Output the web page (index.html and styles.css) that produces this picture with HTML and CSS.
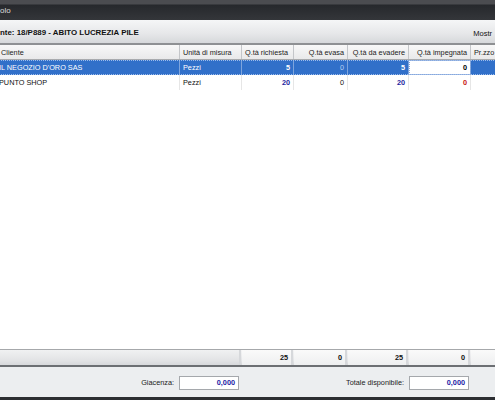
FILE: index.html
```html
<!DOCTYPE html>
<html lang="it">
<head>
<meta charset="utf-8">
<title>Impegni articolo</title>
<link rel="stylesheet" href="styles.css">
</head>
<body>
<div class="window">
  <div class="titlebar"><span class="title">olo</span></div>
  <div class="infobar">
    <span class="info-title">nte: 18/P889 - ABITO LUCREZIA PILE</span>
    <span class="info-right">Mostr</span>
  </div>
  <div class="grid">
    <div class="row head">
      <div class="cell first">Cliente</div>
      <div class="cell">Unità di misura</div>
      <div class="cell">Q.tà richiesta</div>
      <div class="cell num">Q.tà evasa</div>
      <div class="cell num">Q.tà da evadere</div>
      <div class="cell num">Q.tà impegnata</div>
      <div class="cell">Pr.zzo</div>
    </div>
    <div class="row sel">
      <div class="cell first">IL NEGOZIO D'ORO SAS</div>
      <div class="cell">Pezzi</div>
      <div class="cell num b">5</div>
      <div class="cell num dim">0</div>
      <div class="cell num b">5</div>
      <div class="cell num b edit">0</div>
      <div class="cell"></div>
    </div>
    <div class="row">
      <div class="cell first">PUNTO SHOP</div>
      <div class="cell">Pezzi</div>
      <div class="cell num b blue">20</div>
      <div class="cell num">0</div>
      <div class="cell num b blue">20</div>
      <div class="cell num b red">0</div>
      <div class="cell"></div>
    </div>
  </div>
  <div class="totals">
    <div class="tcell span2"></div>
    <div class="tcell num b">25</div>
    <div class="tcell num b">0</div>
    <div class="tcell num b">25</div>
    <div class="tcell num b">0</div>
    <div class="tcell"></div>
  </div>
  <div class="bottom">
    <label class="lbl">Giacenza:</label>
    <div class="input">0,000</div>
    <label class="lbl">Totale disponibile:</label>
    <div class="input">0,000</div>
  </div>
  <div class="strip"></div>
</div>
</body>
</html>
```
FILE: styles.css
```css
html, body {
  margin: 0;
  padding: 0;
  width: 495px;
  height: 400px;
  overflow: hidden;
  background: #ffffff;
}

.window {
  margin-left: -4px;
  width: 520px;
  height: 400px;
  display: flex;
  flex-direction: column;
  font-family: "Liberation Sans", Arial, sans-serif;
  font-size: 7.3px;
  color: #111;
}

.titlebar {
  height: 20px;
  flex: none;
  background: linear-gradient(#4b4c50 0, #4b4c50 4px, #26282c 5px, #34363a 100%);
  display: flex;
  align-items: center;
  padding-left: 4px;
}
.title {
  color: #dcdcdc;
  font-size: 8px;
}

.infobar {
  height: 23px;
  flex: none;
  background: linear-gradient(#f5f6f7, #e6e7e9 60%, #d6d8db);
  border-bottom: 2px solid #8e9093;
  display: flex;
  align-items: center;
  padding-left: 4px;
}
.info-title {
  font-weight: bold;
  font-size: 7.9px;
  color: #111;
  margin-top: 1px;
}
.info-right {
  margin-left: auto;
  margin-right: 24px;
  margin-top: 4px;
  font-size: 7.5px;
}

.grid {
  flex: 1;
  background: #fff;
  display: flex;
  flex-direction: column;
}

.row {
  display: grid;
  grid-template-columns: 184px 62px 52px 54px 61px 62px 45px;
  height: 15px;
}
.row .cell {
  border-right: 1px solid #e6e6e6;
  padding: 0 3px;
  display: flex;
  align-items: center;
  white-space: nowrap;
  overflow: hidden;
}
.row .cell.first { padding-left: 3px; }
.row .num { justify-content: flex-end; }
.row .b { font-weight: bold; }

.head {
  height: 14px;
  background: linear-gradient(#f8f8f8, #e9e9ea);
  border-bottom: 1px solid #a9abae;
}
.head .cell {
  border-right: 1px solid #c4c6c9;
  color: #222;
  padding-left: 3px;
}
.head .cell.first { padding-left: 5px; }
.head .num { justify-content: flex-end; padding-right: 3px; }

.sel {
  background: #3170c9;
  color: #fff;
  outline: 1px dotted #9cbcec;
  outline-offset: -1px;
}
.sel .cell { border-right: 1px solid #7ea4dc; }
.sel .dim { color: #b8cff0; }
.sel .edit {
  background: #fff;
  color: #000;
  outline: 1px dotted #8aa8d8;
  outline-offset: -1px;
}

.blue { color: #1f1f9e; }
.red { color: #c81414; }

.totals {
  flex: none;
  height: 15px;
  border-top: 1px solid #a6a8ab;
  border-bottom: 2px solid #6c6f73;
  background: linear-gradient(#f4f4f5, #e4e5e7 70%, #d5d7da);
  display: grid;
  grid-template-columns: 246px 52px 54px 61px 62px 45px;
}
.tcell {
  border-right: 2px solid #d6d8db;
  display: flex;
  align-items: center;
  padding: 0 3px;
  background: linear-gradient(#fafafa, #eeeff0);
  margin-right: 1px;
}
.tcell.span2 {
  background: linear-gradient(#f0f1f2, #e2e3e5 70%, #d7d9dc);
}
.tcell.num { justify-content: flex-end; }
.tcell.b { font-weight: bold; }

.bottom {
  flex: none;
  height: 30px;
  background: #eceef0;
  display: grid;
  grid-template-columns: 183px 60px 170px 60px;
  align-items: center;
}
.lbl {
  text-align: right;
  padding-right: 5px;
  color: #222;
}
.input {
  height: 12px;
  border: 1px solid #a5a8ac;
  background: #fff;
  color: #2323a6;
  font-weight: bold;
  text-align: right;
  padding-right: 3px;
  line-height: 12px;
  margin-top: 2px;
}

.strip {
  flex: none;
  height: 3px;
  background: #2c2e32;
}
```
